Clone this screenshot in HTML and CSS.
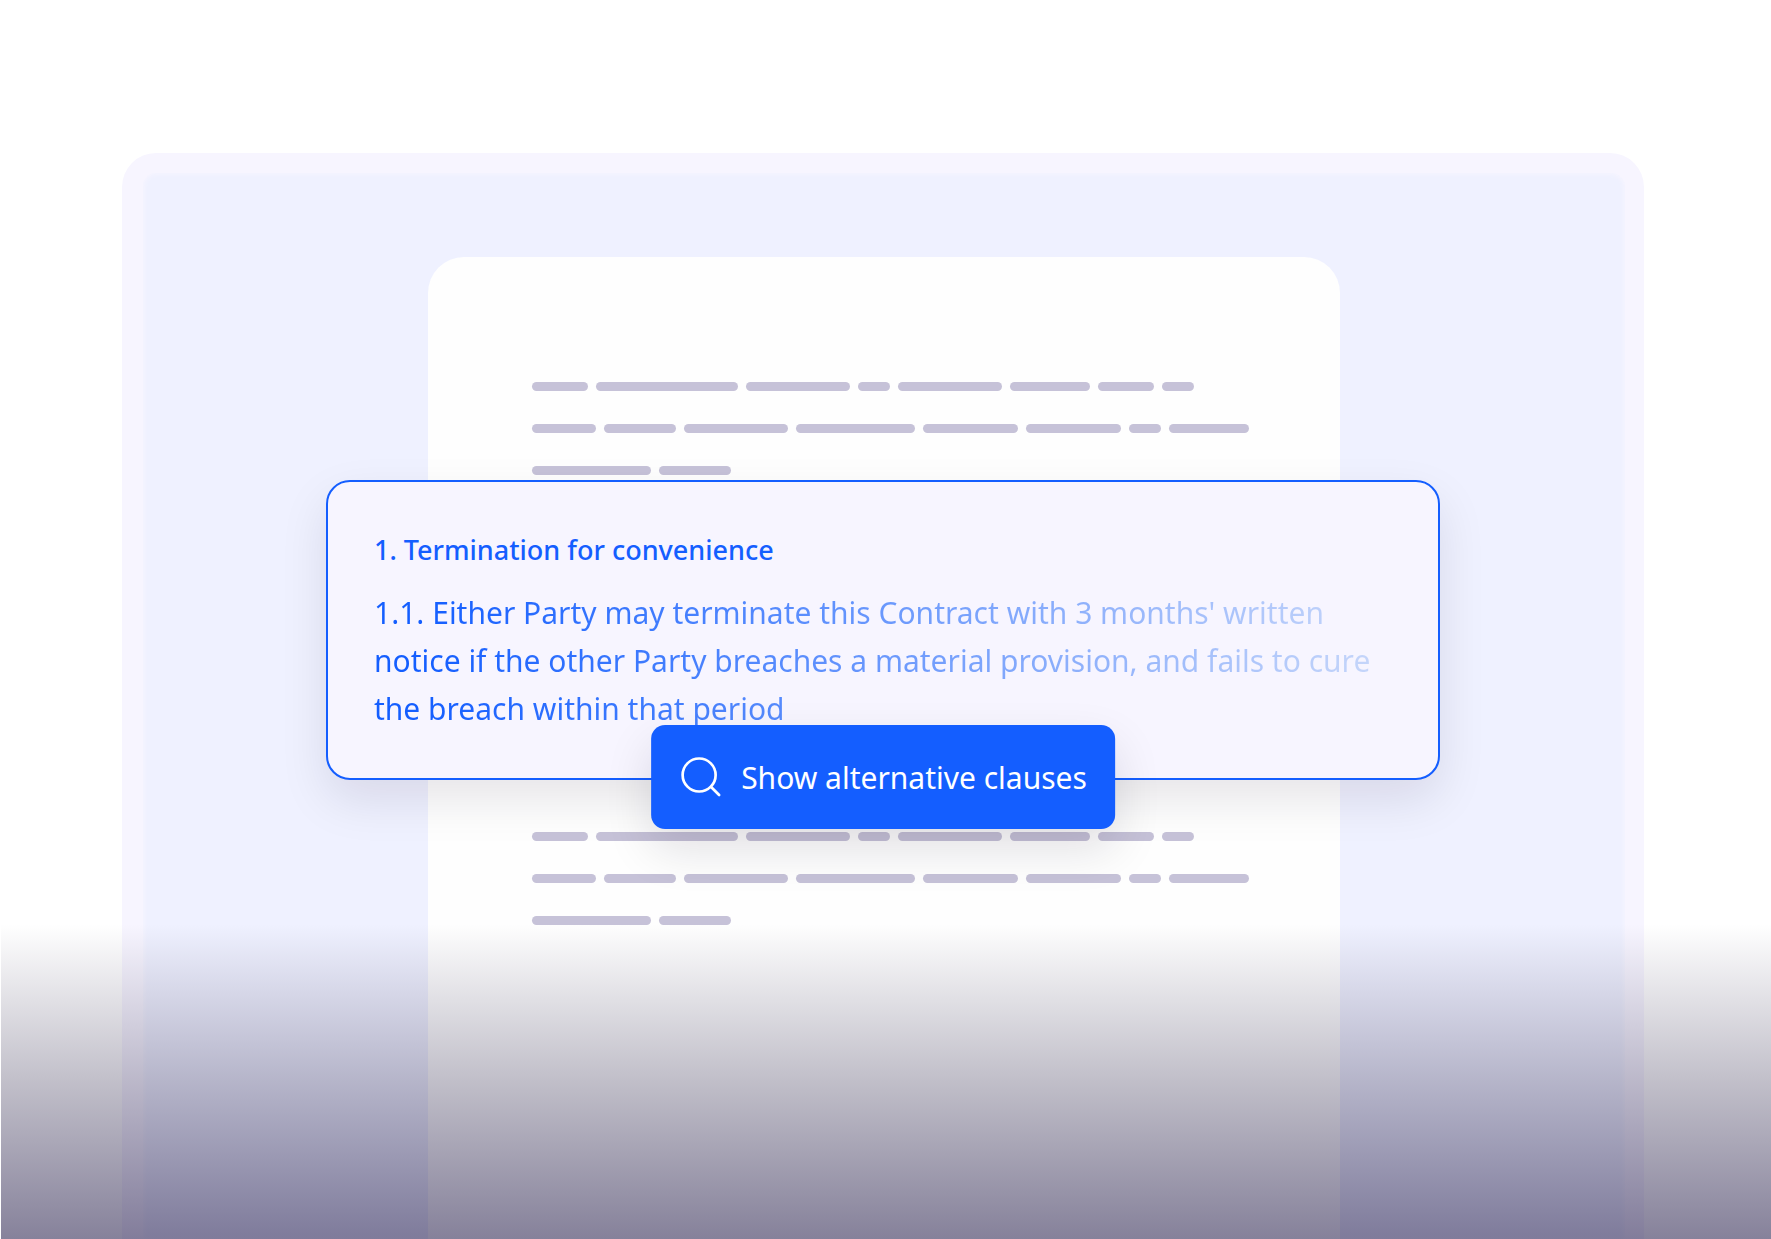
FILE: index.html
```html
<!DOCTYPE html>
<html lang="en">
<head>
    <meta charset="UTF-8">
    <title>Termination for convenience</title>
    <link rel="stylesheet" href="styles.css">
</head>
<body>
<main class="panel">
    <div class="paper">
        <div class="lines">
            <div class="row">
                <i class="w56"></i><i class="w142"></i><i class="w104"></i><i class="w32"></i><i class="w104"></i><i class="w80"></i><i class="w56"></i><i class="w32"></i>
            </div>
            <div class="row">
                <i class="w64"></i><i class="w72"></i><i class="w104"></i><i class="w119"></i><i class="w95"></i><i class="w95"></i><i class="w32"></i><i class="w80"></i>
            </div>
            <div class="row">
                <i class="w119"></i><i class="w72"></i>
            </div>
        </div>

        <section class="clause">
            <h1>1. Termination for convenience</h1>
            <p>1.1. Either Party may terminate this Contract with 3 months' written notice if the other Party breaches a material provision, and fails to cure the breach within that period</p>
            <button type="button" class="show">
                <svg width="44" height="44" viewBox="0 0 44 44" fill="none" stroke="#fff" stroke-width="2.7" stroke-linecap="round">
                    <circle cx="20" cy="20" r="16.5"/>
                    <path d="M32 32l8 8"/>
                </svg>
                <span>Show alternative clauses</span>
            </button>
        </section>

        <div class="lines">
            <div class="row">
                <i class="w56"></i><i class="w142"></i><i class="w104"></i><i class="w32"></i><i class="w104"></i><i class="w80"></i><i class="w56"></i><i class="w32"></i>
            </div>
            <div class="row">
                <i class="w64"></i><i class="w72"></i><i class="w104"></i><i class="w119"></i><i class="w95"></i><i class="w95"></i><i class="w32"></i><i class="w80"></i>
            </div>
            <div class="row">
                <i class="w119"></i><i class="w72"></i>
            </div>
        </div>
    </div>
</main>
<div class="fade"></div>
</body>
</html>
```
FILE: styles.css
```css
* {
    margin: 0;
    padding: 0;
    box-sizing: border-box;
}

body {
    position: relative;
    display: flex;
    min-height: 100vh;
    padding: 153px 127px 0 122px;
    background-color: #fff;
    font-family: "Noto Sans", sans-serif;
    overflow-x: hidden;
}

.panel {
    display: flex;
    flex: 1;
    justify-content: center;
    padding-top: 84px;
    border: solid #f7f5ff;
    border-width: 20px 19px 0 21px;
    border-radius: 34px 34px 0 0;
    background-color: #eff1ff;
    box-shadow: inset 0 0 4px 1px #f7f5ff;
}

.paper {
    width: 912px;
    padding: 125px 104px 0;
    border-radius: 36px 36px 0 0;
    background-color: #fefefe;
}

.lines {
    display: flex;
    flex-direction: column;
    gap: 33px;
}

.row {
    display: flex;
    gap: 8px;
}

.row i {
    flex: none;
    height: 9px;
    border-radius: 5px;
    background-color: #c6c2d8;
}

.w32 { width: 32px; }
.w56 { width: 56px; }
.w64 { width: 64px; }
.w72 { width: 72px; }
.w80 { width: 80px; }
.w95 { width: 95px; }
.w104 { width: 104px; }
.w119 { width: 119px; }
.w142 { width: 142px; }

.clause {
    position: relative;
    height: 300px;
    margin: 5px -204px 52px -206px;
    padding: 48px 46px 0;
    border: 2px solid #145eff;
    border-radius: 24px;
    background-color: #f7f5ff;
    box-shadow: 0 20px 48px rgba(20, 10, 40, 0.1);
}

h1 {
    color: #145eff;
    font-size: 27px;
    font-weight: 500;
    line-height: 40px;
}

p {
    margin-top: 19px;
    background: linear-gradient(90deg, #145eff 5%, #c9d8fa 100%);
    -webkit-background-clip: text;
    background-clip: text;
    color: transparent;
    font-size: 30px;
    line-height: 48px;
}

.show {
    position: absolute;
    left: 50%;
    bottom: -51px;
    display: flex;
    align-items: center;
    gap: 18px;
    height: 104px;
    padding: 0 28px;
    transform: translateX(-50%);
    border: 0;
    border-radius: 14px;
    background-color: #145eff;
    box-shadow: 0 20px 48px rgba(20, 10, 30, 0.12);
    color: #fff;
    font-family: inherit;
    font-size: 30px;
    white-space: nowrap;
    cursor: pointer;
}

.fade {
    position: absolute;
    right: 0;
    bottom: 0;
    left: 1px;
    height: 315px;
    background: linear-gradient(rgba(20, 20, 20, 0), rgba(16, 8, 48, 0.26) 50%, rgba(14, 5, 55, 0.5));
    pointer-events: none;
}
```
